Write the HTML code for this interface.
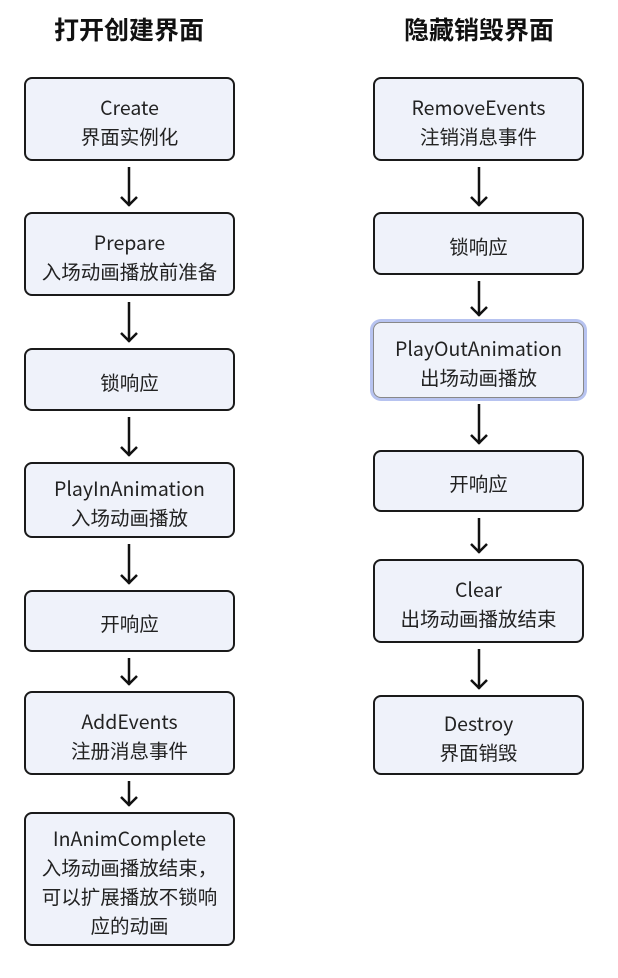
<!DOCTYPE html>
<html><head><meta charset="utf-8"><style>
body{margin:0;width:618px;height:978px;background:#fff;position:relative;overflow:hidden;font-family:"Liberation Sans","Noto Sans CJK SC",sans-serif;}
.t{position:absolute;top:11px;width:260px;text-align:center;font-size:25px;font-weight:bold;color:#111;font-family:"Noto Sans CJK SC",sans-serif;}
.b{position:absolute;box-sizing:border-box;border:2.5px solid #1a1a1a;border-radius:8px;background:#eff2fa;display:flex;align-items:center;justify-content:center;text-align:center;font-size:19.5px;line-height:29px;color:#222;font-family:"Noto Sans CJK SC",sans-serif;padding-top:3px;}
.l{left:24px;width:211px}.r{left:373px;width:211px}
.hl{border:1.5px solid #888;box-shadow:0 0 0 3px #b7c3f0;}
svg{position:absolute;left:0;top:0}
</style></head><body>
<div class="t" style="left:-1px">打开创建界面</div>
<div class="t" style="left:349px">隐藏销毁界面</div>

<div class="b l" style="top:77px;height:84px">Create<br>界面实例化</div>
<div class="b l" style="top:212px;height:84px">Prepare<br>入场动画播放前准备</div>
<div class="b l" style="top:348px;height:63px">锁响应</div>
<div class="b l" style="top:462px;height:76px">PlayInAnimation<br>入场动画播放</div>
<div class="b l" style="top:590px;height:62px">开响应</div>
<div class="b l" style="top:691px;height:84px">AddEvents<br>注册消息事件</div>
<div class="b l" style="top:812px;height:134px">InAnimComplete<br>入场动画播放结束，<br>可以扩展播放不锁响<br>应的动画</div>

<div class="b r" style="top:77px;height:84px">RemoveEvents<br>注销消息事件</div>
<div class="b r" style="top:212px;height:63px">锁响应</div>
<div class="b r hl" style="top:322px;height:76px">PlayOutAnimation<br>出场动画播放</div>
<div class="b r" style="top:450px;height:62px">开响应</div>
<div class="b r" style="top:559px;height:84px">Clear<br>出场动画播放结束</div>
<div class="b r" style="top:695px;height:80px">Destroy<br>界面销毁</div>

<svg width="618" height="978" fill="none" stroke="#111" stroke-width="2.5">
<path d="M129 167V206M121 197L129 205L137 197"/>
<path d="M129 302V342M121 333L129 341L137 333"/>
<path d="M129 417V456M121 447L129 455L137 447"/>
<path d="M129 544V584M121 575L129 583L137 575"/>
<path d="M129 658V685M121 676L129 684L137 676"/>
<path d="M129 781V806M121 797L129 805L137 797"/>
<path d="M479 167V206M471 197L479 205L487 197"/>
<path d="M479 281V316M471 307L479 315L487 307"/>
<path d="M479 404V444M471 435L479 443L487 435"/>
<path d="M479 518V553M471 544L479 552L487 544"/>
<path d="M479 649V689M471 680L479 688L487 680"/>
</svg>
</body></html>
